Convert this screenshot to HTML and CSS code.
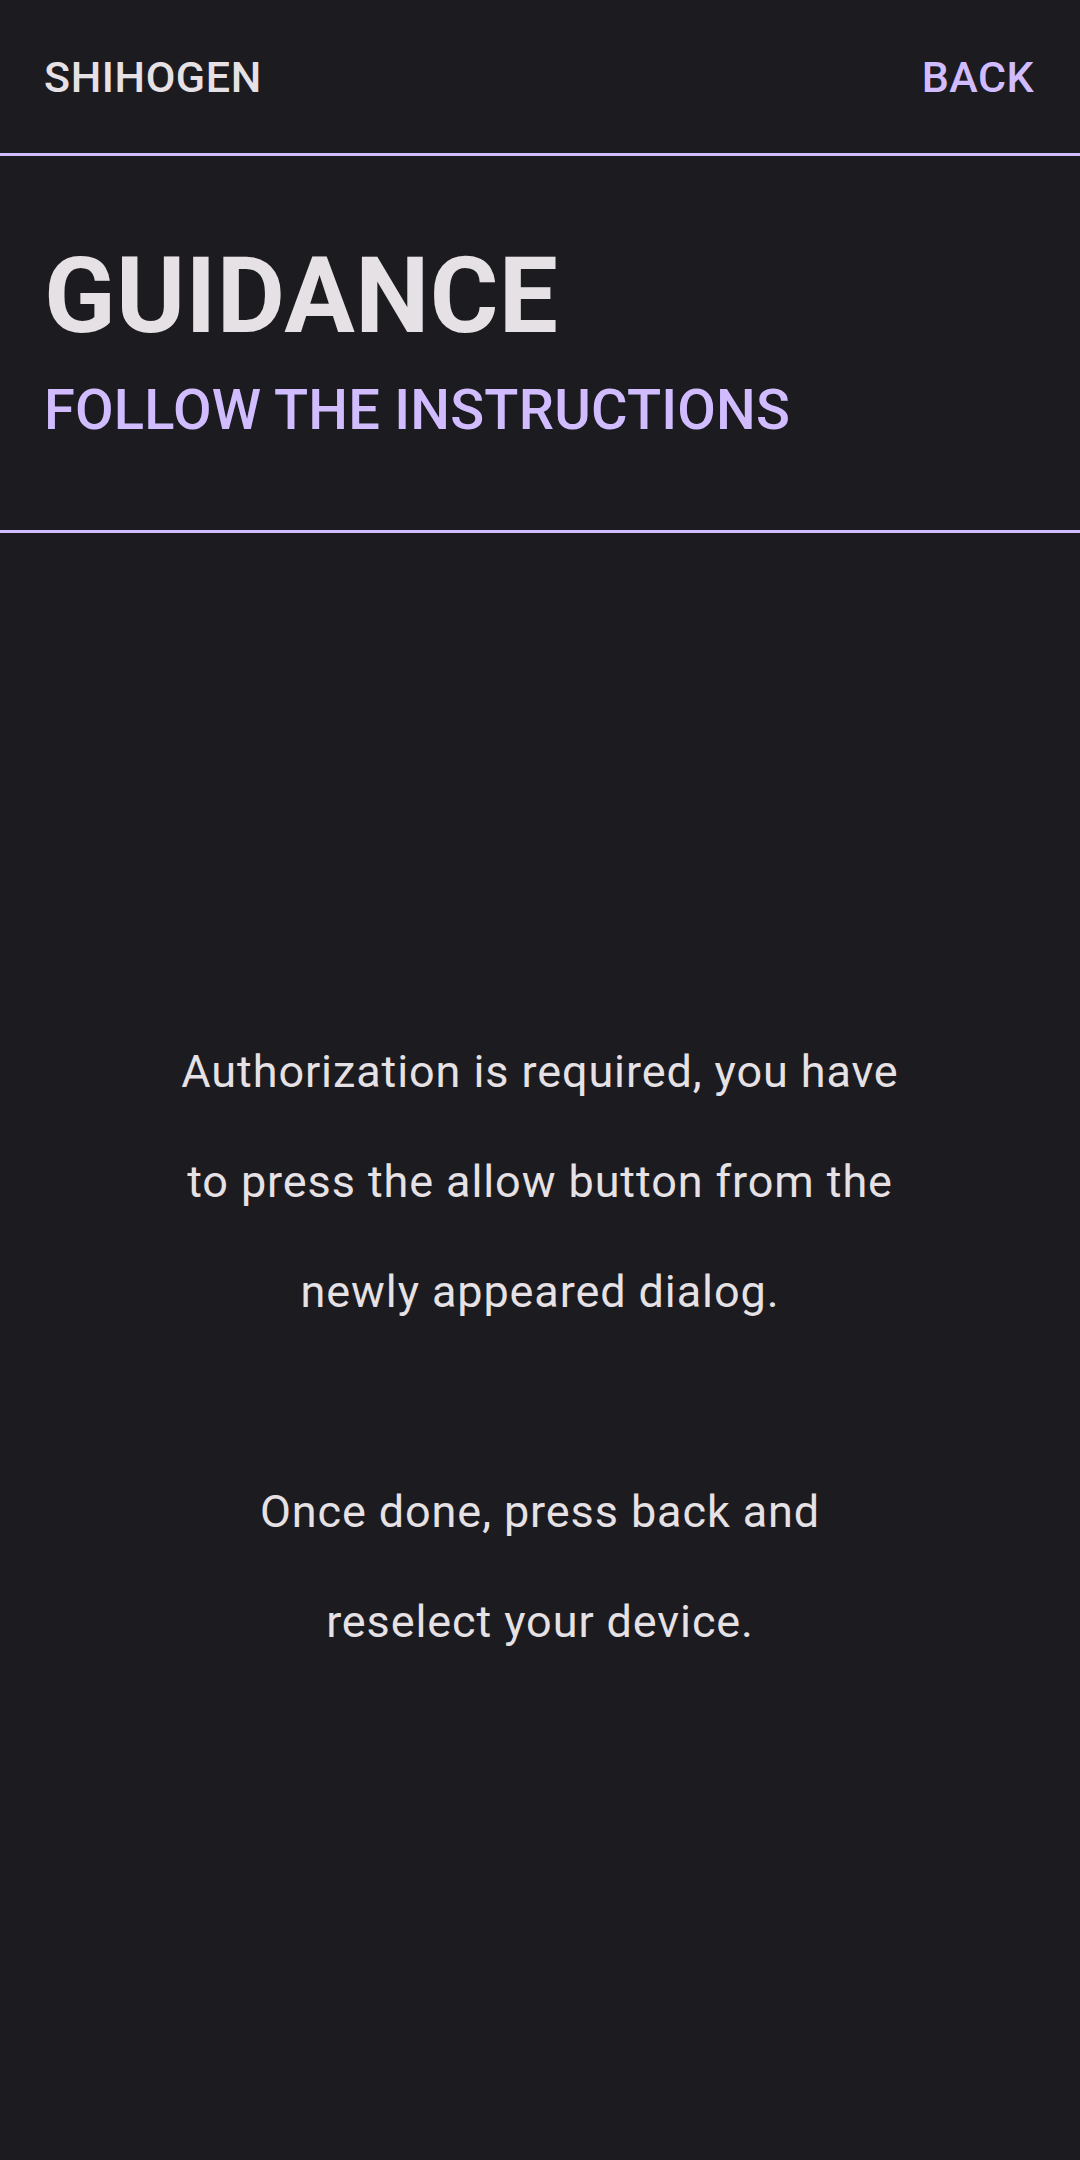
FILE: index.html
```html
<!DOCTYPE html>
<html lang="en">
<head>
<meta charset="utf-8">
<title>Guidance</title>
<link rel="stylesheet" href="styles.css">
</head>
<body>
<div class="screen">
  <header class="topbar">
    <span class="brand">SHIHOGEN</span>
    <span class="back">BACK</span>
  </header>
  <section class="titles">
    <h1 class="title">GUIDANCE</h1>
    <h2 class="subtitle">FOLLOW THE INSTRUCTIONS</h2>
  </section>
  <main class="content">
    <div class="message">
      <p class="para">Authorization is required, you have<br>to press the allow button from the<br>newly appeared dialog.</p>
      <p class="para">Once done, press back and<br>reselect your device.</p>
    </div>
  </main>
</div>
</body>
</html>
```

FILE: styles.css
```css
html, body {
  margin: 0;
  padding: 0;
  background: #1c1b1f;
}

body {
  font-family: Roboto, "Liberation Sans", sans-serif;
  color: #e6e1e5;
}

.screen {
  height: 2160px;
  display: flex;
  flex-direction: column;
}

.topbar {
  height: 156px;
  box-sizing: border-box;
  padding: 0 46px 0 44px;
  display: flex;
  align-items: center;
  justify-content: space-between;
  border-bottom: 3px solid #d0bcff;
  flex: none;
}

.brand {
  font-size: 43px;
  font-weight: 500;
  letter-spacing: 0.6px;
  color: #e6e1e5;
  line-height: 52px;
}

.back {
  font-size: 43px;
  font-weight: 500;
  letter-spacing: 0.4px;
  color: #d0bcff;
  line-height: 52px;
}

.titles {
  padding: 79px 44px 87px 44px;
  border-bottom: 3px solid #d0bcff;
  flex: none;
}

.title {
  margin: 0;
  font-size: 105px;
  font-weight: 700;
  line-height: 124px;
  color: #e6e1e5;
  letter-spacing: 0.4px;
}

.subtitle {
  margin: 18px 0 0 0;
  font-size: 56px;
  font-weight: 500;
  line-height: 66px;
  color: #d0bcff;
  letter-spacing: 0.2px;
}

.content {
  flex: 1;
  display: flex;
  align-items: center;
  justify-content: center;
}

.message {
  text-align: center;
}

.para {
  margin: 0;
  font-size: 45px;
  line-height: 110px;
  letter-spacing: 0.9px;
  color: #e6e1e5;
}

.para + .para {
  margin-top: 110px;
}
```
